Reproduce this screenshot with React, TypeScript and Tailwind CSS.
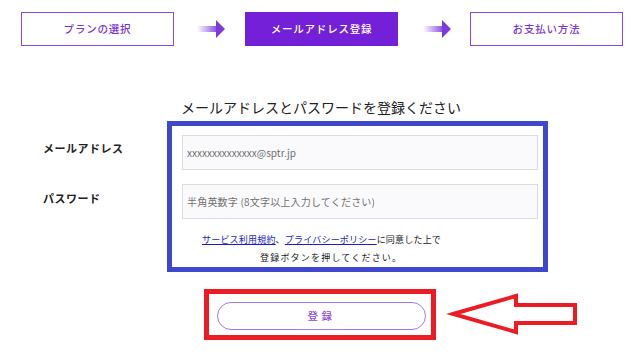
import React from 'react';

const StepArrow: React.FC<{ id: string }> = ({ id }) => (
  <svg width="28" height="18" viewBox="0 0 28 18">
    <defs>
      <linearGradient id={id} x1="0" y1="0" x2="1" y2="0">
        <stop offset="0" stopColor="#ffffff" />
        <stop offset="1" stopColor="#8a4fe0" />
      </linearGradient>
    </defs>
    <rect x="0" y="6" width="20" height="6" fill={`url(#${id})`} />
    <polygon points="19,0 28,9 19,18" fill="#7c3ad8" />
  </svg>
);

const Step: React.FC<{ label: string; active?: boolean }> = ({ label, active }) => (
  <div
    className={
      active
        ? 'w-[153px] h-[34px] flex items-center justify-center bg-[#7420d8] text-white text-[10.5px] font-medium tracking-[0.8px]'
        : 'w-[153px] h-[34px] flex items-center justify-center border border-[#8a46e0] text-[#7a34d6] text-[10.5px] font-medium tracking-[0.8px]'
    }
  >
    {label}
  </div>
);

export default function App() {
  return (
    <div
      className="w-[640px] h-[351px] bg-white overflow-hidden text-[#222]"
      style={{ fontFamily: '"Noto Sans CJK JP", "Noto Sans", sans-serif' }}
    >
      {/* steps */}
      <div className="flex items-center pt-[12px] pl-[21px]">
        <Step label="プランの選択" />
        <div className="ml-[23px] mr-[20px] flex">
          <StepArrow id="ga" />
        </div>
        <Step label="メールアドレス登録" active />
        <div className="ml-[25px] mr-[19px] flex">
          <StepArrow id="gb" />
        </div>
        <Step label="お支払い方法" />
      </div>

      {/* heading */}
      <h2 className="mt-[50px] pl-[181px] text-[14px] leading-[22px] text-[#222]">
        メールアドレスとパスワードを登録ください
      </h2>

      {/* form */}
      <div className="flex mt-[3px]">
        <div className="w-[167px] pl-[43px] pt-[19px] flex flex-col gap-[34px] text-[11px] leading-[16px] font-bold tracking-[0.5px]">
          <p>メールアドレス</p>
          <p>パスワード</p>
        </div>
        <div className="w-[381px] h-[151px] border-[5px] border-[#3f48cc] pt-[9px] pl-[10px]">
          <div className="w-[356px] h-[35px] border border-[#dddddd] bg-[#fafafc] flex items-center pl-[4px] text-[10px] text-[#707070]">
            xxxxxxxxxxxxxx@sptr.jp
          </div>
          <div className="mt-[14px] w-[356px] h-[35px] border border-[#dddddd] bg-[#fafafc] flex items-center pl-[4px] text-[10px] text-[#707070] tracking-[0.2px]">
            半角英数字 (8文字以上入力してください)
          </div>
          <div className="-ml-[10px] mt-[12px] text-[9px] leading-[18px] text-[#222]">
            <p className="pl-[30px] tracking-[0.2px]">
              <span className="text-[#1b1bd0] underline">サービス利用規約</span>、
              <span className="text-[#1b1bd0] underline">プライバシーポリシー</span>に同意した上で
            </p>
            <p className="pl-[88px] tracking-[1.2px]">登録ボタンを押してください。</p>
          </div>
        </div>
      </div>

      {/* submit */}
      <div className="flex items-center mt-[17px] pl-[204px]">
        <div className="w-[232px] h-[51px] border-[5px] border-[#ed1c24] pt-[7px] pl-[8px]">
          <button className="w-[209px] h-[28px] rounded-full border border-[#a57ae6] bg-white text-[10.5px] text-[#8a4ad8] font-medium tracking-[3.5px]">
            登録
          </button>
        </div>
        <svg width="136" height="50" viewBox="0 0 136 50" className="ml-[10px]">
          <polygon
            points="7,24 70,6 70,15 129,15 129,33 70,33 70,42"
            fill="white"
            stroke="#ed1c24"
            strokeWidth="4"
            strokeLinejoin="miter"
          />
        </svg>
      </div>
    </div>
  );
}
